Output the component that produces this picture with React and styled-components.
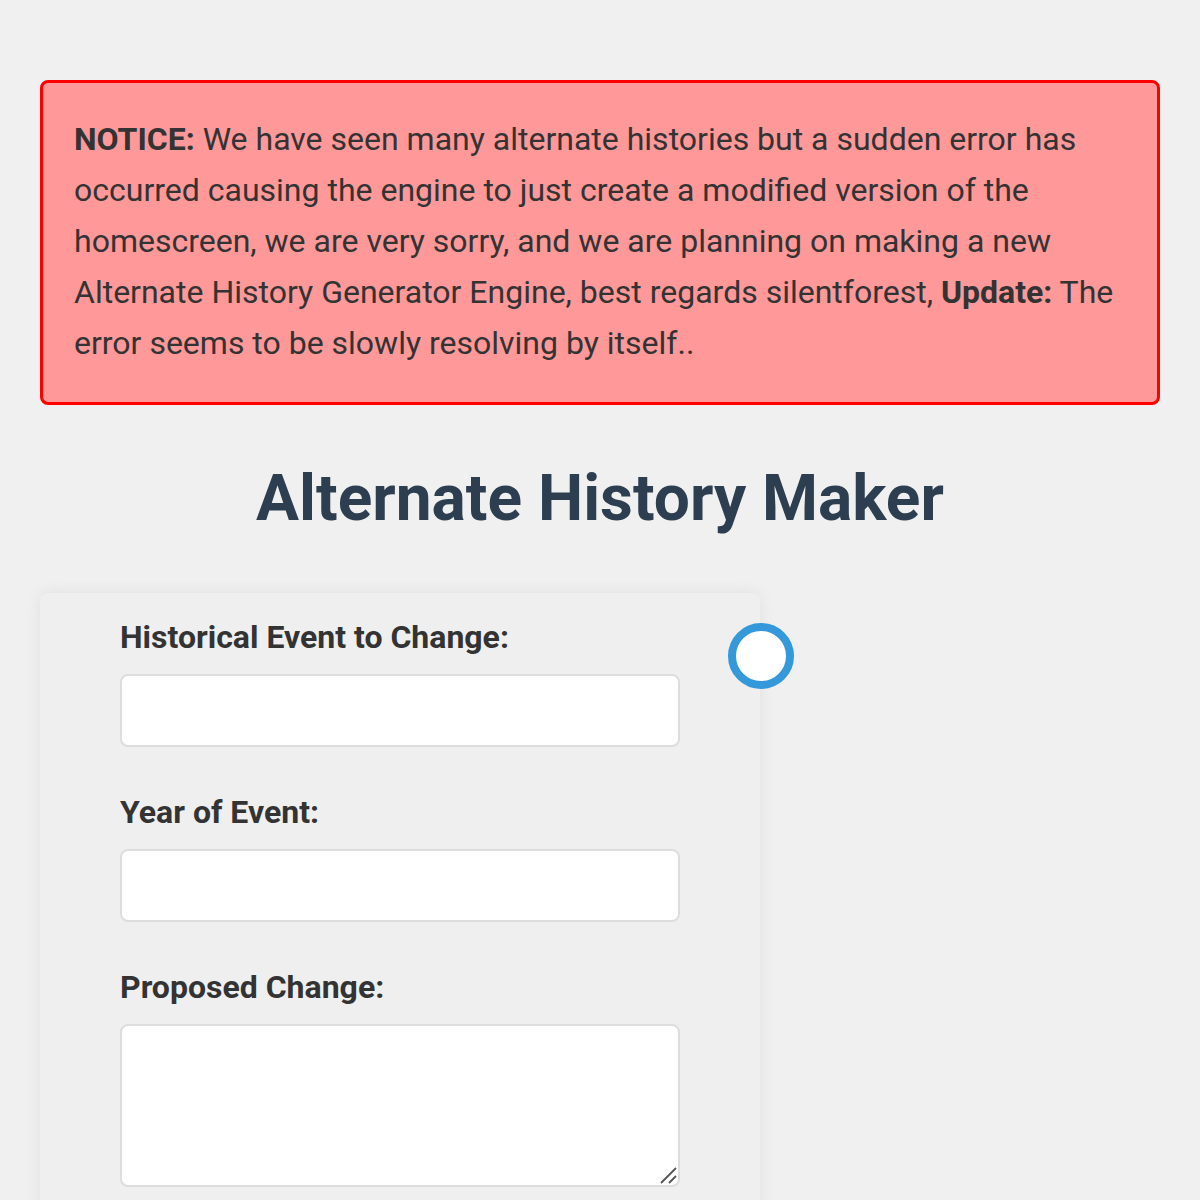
import styled, { createGlobalStyle } from 'styled-components'

const GlobalStyle = createGlobalStyle`
  * {
    box-sizing: border-box;
  }
  body {
    margin: 0;
    background: #f0f0f0;
    font-family: Roboto, "Liberation Sans", Arial, sans-serif;
    color: #333;
  }
`

const Page = styled.div`
  padding: 80px 40px 40px;
`

const Notice = styled.div`
  background: #ff9999;
  border: 3px solid #ff0000;
  border-radius: 8px;
  padding: 31px 32px 33px 31px;
  font-size: 32px;
  line-height: 51px;
  color: #333;
`

const Title = styled.h1`
  margin: 56px 0 57px;
  text-align: center;
  font-size: 64px;
  line-height: 75px;
  font-weight: 700;
  color: #2c3e50;
`

const Card = styled.div`
  position: relative;
  width: 720px;
  background: #efefef;
  border-radius: 8px;
  box-shadow: 0 0 16px rgba(0, 0, 0, 0.07);
  padding: 25px 80px 40px;
`

const Spinner = styled.div`
  position: absolute;
  top: 30px;
  right: -34px;
  width: 66px;
  height: 66px;
  border-radius: 50%;
  border: 8px solid #3498db;
  background: #fff;
`

const Field = styled.div`
  margin-bottom: 46px;
`

const Label = styled.label`
  display: block;
  font-size: 32px;
  line-height: 38px;
  font-weight: 700;
  color: #333;
  margin-bottom: 18px;
`

const Input = styled.input`
  display: block;
  width: 100%;
  height: 73px;
  border: 2px solid #ddd;
  border-radius: 8px;
  background: #fff;
  font: inherit;
  font-size: 28px;
  padding: 0 16px;
  outline: none;
`

const AreaWrap = styled.div`
  position: relative;
`

const TextArea = styled.textarea`
  display: block;
  width: 100%;
  height: 163px;
  border: 2px solid #ddd;
  border-radius: 8px;
  background: #fff;
  font: inherit;
  font-size: 28px;
  padding: 12px 16px;
  outline: none;
  resize: none;
`

const Grip = styled.svg`
  position: absolute;
  right: 3px;
  bottom: 3px;
  width: 18px;
  height: 18px;
  pointer-events: none;
`

const App = () => {
  return (
    <Page>
      <GlobalStyle />
      <Notice>
        <strong>NOTICE:</strong> We have seen many alternate histories but a sudden error has
        occurred causing the engine to just create a modified version of the homescreen, we are
        very sorry, and we are planning on making a new Alternate History Generator Engine, best
        regards silentforest, <strong>Update:</strong> The error seems to be slowly resolving by
        itself..
      </Notice>
      <Title>Alternate History Maker</Title>
      <Card>
        <Spinner />
        <Field>
          <Label htmlFor="event">Historical Event to Change:</Label>
          <Input id="event" type="text" />
        </Field>
        <Field>
          <Label htmlFor="year">Year of Event:</Label>
          <Input id="year" type="text" />
        </Field>
        <Field>
          <Label htmlFor="change">Proposed Change:</Label>
          <AreaWrap>
            <TextArea id="change" />
            <Grip viewBox="0 0 18 18">
              <path d="M2 17 L17 2 M10 17 L17 10" stroke="#555" strokeWidth="1.8" fill="none" />
            </Grip>
          </AreaWrap>
        </Field>
      </Card>
    </Page>
  )
}

export default App
